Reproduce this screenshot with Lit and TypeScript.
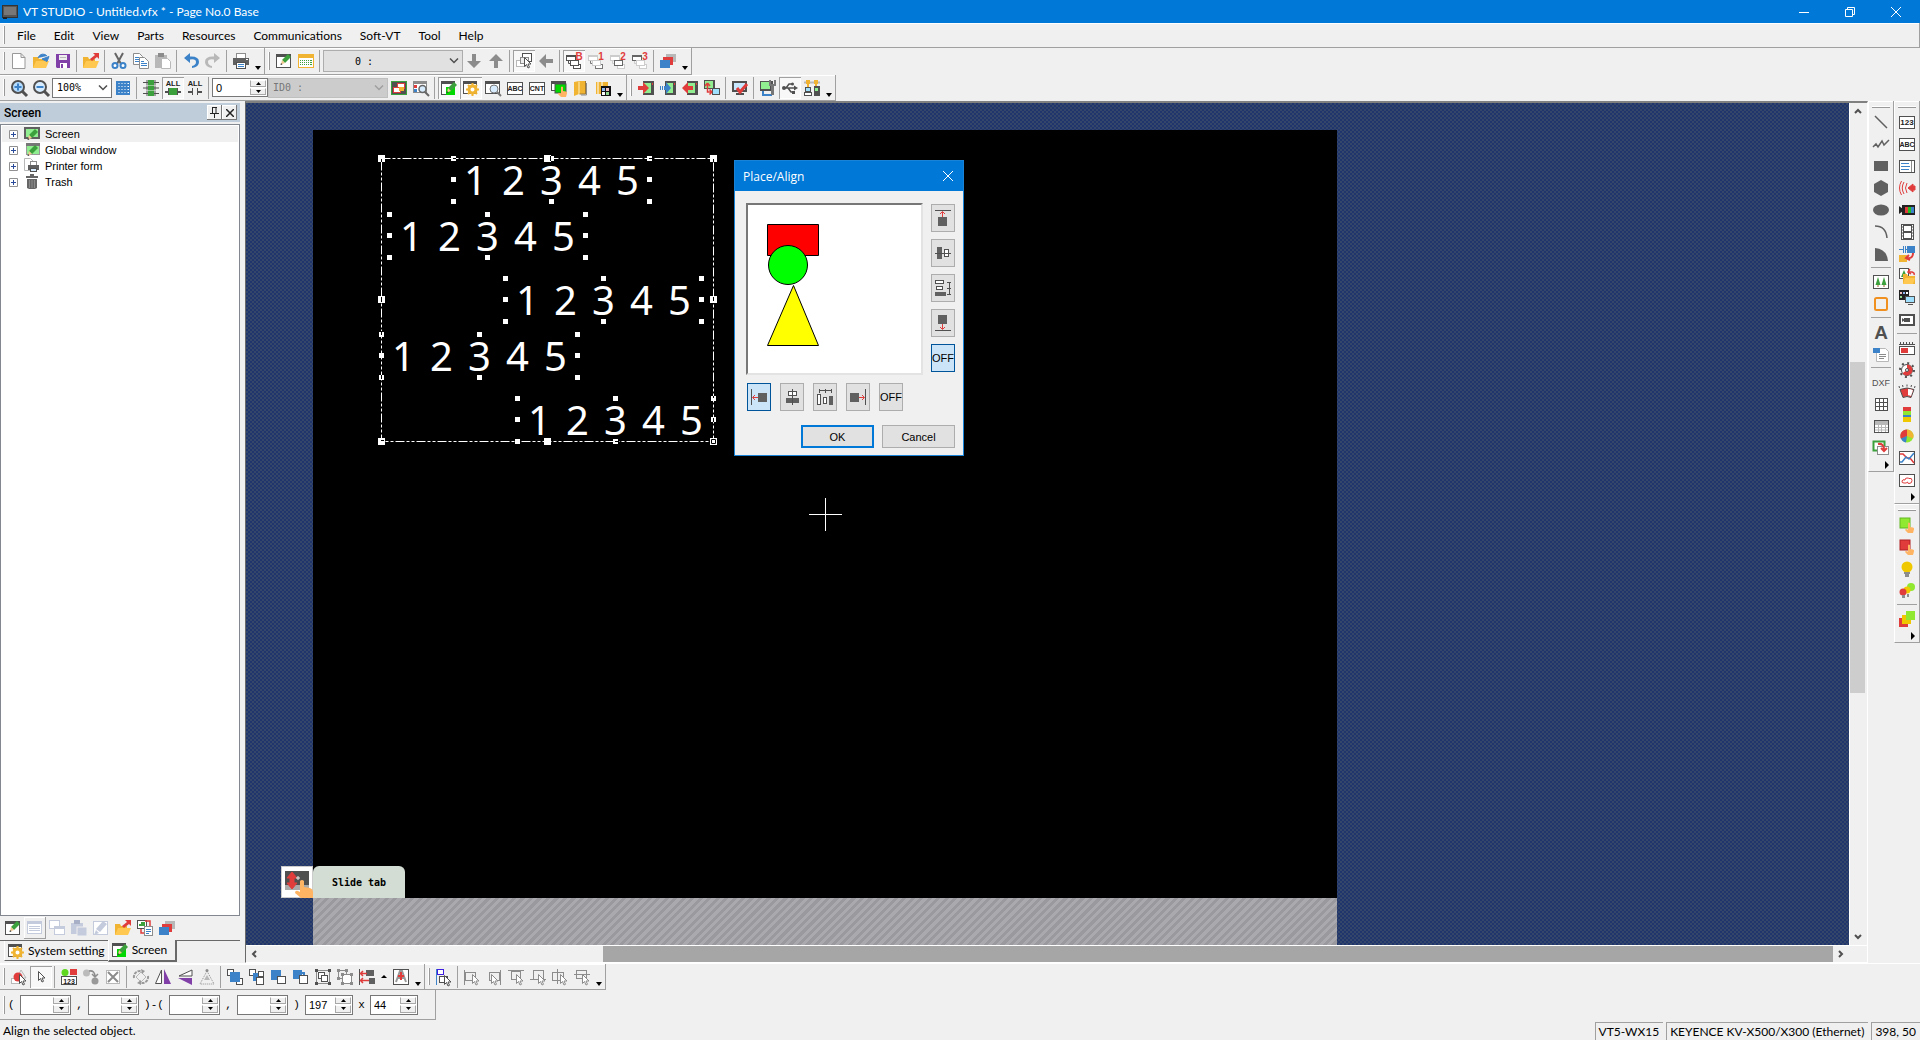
import { LitElement, html, svg, css, TemplateResult, SVGTemplateResult } from "lit";
import { customElement, property } from "lit/decorators.js";
import { classMap } from "lit/directives/class-map.js";
import { styleMap } from "lit/directives/style-map.js";

type Shape = SVGTemplateResult | SVGTemplateResult[];

const D = "#505050";
const M = "#8c8c8c";
const L = "#b8b8b8";
const RD = "#e03c3c";
const GR = "#3ca03c";
const LG = "#90ee90";
const BL = "#3c82c8";
const YE = "#f0b432";
const PU = "#8040a8";
const SK = "#ffb464";
const PALE = "#c4cbdc";

const R = (x: number, y: number, w: number, h: number, f = "none", s = "none", sw = 1) =>
  svg`<rect x=${x} y=${y} width=${w} height=${h} fill=${f} stroke=${s} stroke-width=${sw} />`;
const P = (d: string, f = "none", s = "none", sw = 1) =>
  svg`<path d=${d} fill=${f} stroke=${s} stroke-width=${sw} />`;
const C = (x: number, y: number, r: number, f = "none", s = "none", sw = 1) =>
  svg`<circle cx=${x} cy=${y} r=${r} fill=${f} stroke=${s} stroke-width=${sw} />`;
const T = (x: number, y: number, t: string, size = 7, f = "#222") =>
  svg`<text x=${x} y=${y} font-size=${size} fill=${f} text-anchor="middle" font-weight="bold" font-family="Liberation Sans, sans-serif">${t}</text>`;

const windowBox = (x: number, y: number, w: number, h: number, c = D, f = "#fff") => [
  R(x + 0.5, y + 0.5, w - 1, h - 1, f, c),
  R(x, y, w, 3, c),
];
const pencil = (x: number, y: number) =>
  svg`<g transform="translate(${x} ${y})">${P("M2 6L8 0l3 3-6 6z", GR)}${P("M2 6l3 3-4 1.5z", "#f0c890")}${P("M.5 11l.5-2 1.500 1.500z", "#333")}</g>`;
const arrowCursor = (x: number, y: number, c = D) =>
  svg`<g transform="translate(${x} ${y})">${P("M.5.5v9l2-2 1.500 3.500 1.500-.700-1.500-3.300h3z", "#fff", c)}</g>`;
const hand = (x: number, y: number) =>
  svg`<g transform="translate(${x} ${y})">${P("M3 0q1-.8 2 0v4l3 .6q1.500.400 1 2l-1 3.400h-5L0 7q.500-1.500 2-.7l1 .4z", SK)}</g>`;
const folder = (x: number, y: number) =>
  svg`<g transform="translate(${x} ${y})">${P("M0 0h5l1 2h6v9H0z", YE)}${P("M3 4h13l-3 7H0z", "#ffc850")}</g>`;
const layers = [R(6, 1, 10, 8, L), R(3, 4, 10, 8, RD), R(0, 7, 10, 8, BL)];
const stack = (n: string, a: string, b: string, c: string): Shape => [
  R(0.5, 2.5, 9, 5, "#fff", a),
  R(0, 2, 10, 2, a),
  P("M2.500 8v2.500h3M8.500 12v2.500h1", "none", c),
  R(7.5, 11.5, 7, 4, "#fff", c),
  R(4.5, 7.5, 8, 5, "#fff", b),
  T(13, 7, n, 10, RD),
];
const plcArrow = (c: string, d: string) => [
  R(5, 1, 11, 14, D), R(6, 3, 7, 10, LG), R(14, 3, 1, 2, RD), P(d, c),
];
const boxedText = (t: string) => [R(0.5, 2.5, 15, 12, "#fff", D), T(8, 11, t, 7)];

const ICONS: Record<string, Shape> = {
  "new": P("M1.500.5h8.500l4 4v11H1.500zM10 .5v4h4", "#fff", "#999"),
  "open": [folder(0, 4), P("M5 5q2-5 7-3.500l2 1.500M16 3.500l-2 5-5-2.500z", BL, BL)],
  "save": [P("M1 1h14v14H2l-1-1z", PU), R(4, 2, 8, 5, "#eee"), R(5, 10, 7, 5, "#fff"), R(6, 11, 2, 4, PU), R(5, 4, 6, 1, L)],
  "export": [folder(0, 4), P("M16 0v6l-2-2-5 4-2-2 5-4-2-2z", RD)],
  "cut": [P("M4 0l6 11M12 0L6 11", "none", "#666", 2), C(4, 12.5, 2.5, "#fff", BL, 2), C(12, 12.5, 2.5, "#fff", BL, 2)],
  "copy": [P("M.5.5h6l3 3v8h-9z", "#fff", M), P("M2 4.500h4M2 6.500h5M2 8.500h5", "none", BL), P("M6.500 4.500h5l4 4v7h-9z", "#fff", M), P("M8 8.500h3M8 10.500h6M8 12.500h6", "none", BL)],
  "paste": [R(0, 2, 12, 13, L), R(3, 0, 6, 4, M), P("M6.500 5.500h6l3 3v7h-9z", "#fff", L)],
  "undo": P("M7 0L1 5l6 5V6.500q6-1 6 2.500 0 3-4 4v2q7-1 7-6 0-6-9-5.500z", BL),
  "redo": P("M9 0l6 5-6 5V6.500q-6-1-6 2.500 0 3 4 4v2q-7-1-7-6 0-6 9-5.500z", L),
  "print": [R(3.5, 0.5, 9, 6, "#fff", M), R(0, 5, 16, 7, "#606060"), R(3.5, 9.5, 9, 6, "#fff", D), P("M5 11.500h6M5 13.500h6", "none", BL), R(13, 6, 2, 1, "#fff")],
  "edit": [...windowBox(0, 1, 15, 14), pencil(4, 1)],
  "schedule": [R(0.5, 1.5, 15, 13, "#fff", YE), R(0, 1, 16, 4, YE), P("M2 7.500h12M2 9.500h12M2 11.500h12", "none", GR), P("M3.500 6v8M5.500 6v8M7.500 6v8M9.500 6v8M11.500 6v8", "none", "#fff")],
  "down": P("M6 1h4v7h5l-7 7-7-7h5z", M),
  "up": P("M6 15h4V8h5L8 1 1 8h5z", M),
  "left": P("M15 6v4H8v5L1 8l7-7v5z", M),
  "pick": [R(6.5, 0.5, 9, 8, "#fff", D), R(0.5, 7.5, 9, 6, "#fff", L), R(4.5, 4.5, 8, 6, "#eee", M), arrowCursor(8, 4)],
  "base": stack("B", D, D, D),
  "win 1": stack("1", "#ccc", "#ccc", "#777"),
  "win 2": stack("2", "#ccc", "#666", "#ccc"),
  "win 3": stack("3", "#666", "#ccc", "#ccc"),
  "layers": layers,
  "zoom in": [C(7, 7, 6, "#b4dcff", D, 2), P("M11 11l5 5", "none", D, 3), P("M7 3.500v7M3.500 7h7", "none", BL, 2)],
  "zoom out": [C(7, 7, 6, "#d8ecff", D, 2), P("M11 11l5 5", "none", D, 3), P("M3.500 7h7", "none", BL, 2)],
  "grid": [R(1, 1, 14, 14, BL), P("M2 3.500h12M2 6.500h12M2 9.500h12M2 12.500h12", "none", "#fff"), P("M2.500 2v12M5.500 2v12M8.500 2v12M11.500 2v12", "none", BL, 2)],
  "rows": [P("M0 2.500h16M0 8h16M0 13.500h16", "none", D, 1), R(5, 0, 6, 5, GR), R(5, 5.5, 6, 5, GR), R(5, 11, 6, 5, GR), P("M4 0v5M12 0v5M4 5.500v5M12 5.500v5M4 11v5M12 11v5", "none", D)],
  "all on": [T(8, 6, "ALL", 7.5), P("M0 12h16", "none", D, 2), R(4, 8, 8, 7, GR), P("M3.500 8v7M12.500 8v7", "none", D)],
  "all off": [T(8, 6, "ALL", 7.5), P("M1 12h4M11 12h4", "none", D, 2), P("M5.500 8v7M10.500 8v7", "none", D)],
  "frames": [R(0, 1, 16, 14, D), R(0.5, 1.500, 15, 13, D, GR), R(6.5, 3.5, 7, 5, "#fff", RD), R(2.5, 7.500, 7, 5, "#fff", RD), R(8, 7, 5, 4, YE)],
  "find": [...windowBox(0, 1, 14, 12, M), R(1, 5, 3, 3, RD), R(1, 9, 3, 3, BL), C(9.500, 9, 3.500, "#d8ecff", "#666", 1.500), P("M12 12l4 4", "none", "#666", 2)],
  "screen edit": [...windowBox(0, 1, 14, 14), R(5, 7, 9, 8, "#00d800"), pencil(5, 2)],
  "settings": [...windowBox(0, 1, 14, 13), C(9.5, 9.5, 3.500, "#fff", YE, 3), P("M9.500 3v3M9.500 13v3M3 9.500h3M13 9.500h3M5 5l2 2M12 12l2 2M5 14l2-2M12 7l2-2", "none", YE, 2)],
  "preview": [...windowBox(0, 1, 15, 13), C(9, 9, 4, "#d8ecff", "#777"), P("M12 12l4 4", "none", "#777", 2)],
  "abc": boxedText("ABC"),
  "cnt": boxedText("CNT"),
  "touch": [...windowBox(0, 1, 15, 10), R(4, 4, 11, 9, "#00d800", D), hand(7, 7)],
  "book": [P("M1 2l5-1h6v13H6l-5 2z", YE), P("M6 1.500v13", "none", "#fff0c0"), P("M12.500 1v13h-6", "none", "#a07830"), P("M13.500 3v12H8", "none", M)],
  "catalog": [P("M1 2h12v12H1z", YE), P("M3 2v12M7 1v5", "none", "#fff"), R(6, 6, 10, 10, "#111"), R(7, 8, 3, 3, "#90b8f0"), R(11, 8, 3, 3, "#f0c0c0"), R(7, 12, 3, 3, "#fff"), R(11, 12, 3, 3, "#90d890")],
  "send": plcArrow(RD, "M0 6h5V2l6 6-6 6v-4H0z"),
  "send part": plcArrow(BL, "M0 6h1v4H0zM2 6h1v4H2zM4 6h2V2l5 6-5 6v-4H4z"),
  "receive": plcArrow(RD, "M11 6H6V2L0 8l6 6v-4h5z"),
  "sync": [R(0, 0, 11, 9, D), R(1, 1, 8, 7, LG), R(8.5, 8.5, 7, 6, "#a0e0ff", D), P("M3.500 5v7H8M3.500 3L1 6M3.500 3L6 6M8 12l-2.500-2.500M8 12l-2.500 2.500", "none", RD, 1.5)],
  "verify": [R(0, 1, 15, 11, D), R(2, 3, 11, 7, "#c8e8ff"), R(4, 13, 8, 2, D), P("M5 8l3 4 7-8", "none", RD, 3)],
  "comm setup": [R(0, 1, 13, 10, D), R(1, 2, 9, 7, LG), P("M3 11v4h9", "none", BL, 2), P("M12.500 4v11", "none", "#777", 3), P("M10 0v5h5V0", "none", "#777", 2)],
  "usb": [P("M1 8h12M4 8l3-4h3M6 8l3 4h3", "none", D, 1.5), C(2, 8, 2, D), C(10.5, 4, 1.5, D), R(10, 11, 3, 3, D), P("M12 5.500v5l4-2.500z", D)],
  "network": [P("M0 2.500h16", "none", L, 2), P("M4 2v6M12 2v5", "none", YE, 2), R(2, 0, 4, 4, YE), R(10, 0, 4, 4, YE), R(1.5, 7.5, 5, 4, "#a0e0ff", D), R(0.5, 12.5, 7, 3, "#fff", D), R(10, 6, 6, 10, D), R(11, 8, 3, 3, LG)],
  "list": [...windowBox(0, 1, 15, 13, PALE), P("M2 6.500h11M2 8.500h11M2 10.500h11", "none", PALE)],
  "copy off": [R(0.5, 0.5, 10, 8, "#fff", PALE), ...windowBox(5, 6, 11, 9, PALE)],
  "paste off": [R(0, 3, 12, 11, PALE), R(3, 0, 6, 4, "#a8b0c8"), R(6, 7, 10, 9, PALE, "#f0f0f0")],
  "rename off": [R(0.5, 1.5, 14, 13, "#fff", PALE), P("M3 9l7-8 4 3-7 8zM3 10l3 3-5 2z", PALE)],
  "convert": [R(0.5, 0.5, 9, 8, "#fff", D), P("M2 5h6M4 3h4", "none", GR, 2), P("M8 1h5v7M4 9v4h4", "none", RD, 1.5), R(7.5, 6.5, 8, 9, "#fff", M), P("M9 9.500h5M9 11.500h5M9 13.500h3", "none", BL)],
  "select shape": [P("M10 1l5 8H6z", "#eee", L), R(0.5, 9.500, 8, 5, "#fff", L), C(7, 8, 4.500, RD), arrowCursor(8, 5)],
  "select": arrowCursor(5, 2),
  "parts": [C(4, 3.5, 3.5, "#60d820"), R(9, 0, 7, 6, RD), R(0.5, 7.500, 15, 8, "#fff", D), T(8, 14.5, "123", 7)],
  "swap": [C(3.5, 4, 3.5, "#bbb"), C(12, 12, 3.5, "#999"), P("M6 2q6-1 6 6M9 5l3 3 3-3", "none", M, 1.5)],
  "delete": [R(1.5, 1.5, 13, 13, "#fff", L), P("M3 3l10 10M13 3L3 13", "none", M, 2)],
  "rotate": [P("M8 3l5 5-5 5-5-5z", "none", L), svg`<path d="M1 9a6 6 0 0 1 7-7M15 7a6 6 0 0 1-7 7" fill="none" stroke="#999" stroke-width="2" stroke-dasharray="3 1" />`, P("M8 0l4 2-3 3zM8 11l-4 3 4 2z", "#999")],
  "flip h": [P("M6.500 1v13.500H.5z", "#fff", D), P("M9 0v15h7z", PU)],
  "flip v": [P("M15 1v6H2z", "#fff", D), P("M15 9v7L1 9z", PU)],
  "slant": [svg`<path d="M8 2L1 15h14z" fill="none" stroke="#8c8c8c" stroke-dasharray="1 1" />`, P("M8 6l-3 5h6z", L), C(8, 1.5, 1.5, M)],
  "front": [R(0.5, 0.5, 6, 6, "#fff", D), R(9.5, 9.5, 6, 6, "#fff", D), R(3, 3, 10, 10, BL)],
  "forward": [R(0.5, 0.5, 6, 6, "#fff", D), R(4, 4, 8, 8, BL), R(9.5, 2.5, 5, 5, "#fff", D), R(7.5, 8.500, 7, 7, "#fff", D)],
  "backward": [R(0, 1, 10, 10, BL), R(6.5, 7.500, 8, 7, "#fff", D)],
  "back": [R(0, 1, 9, 9, BL), P("M9 4h2v3", "none", BL, 2), R(6.5, 6.500, 8, 8, "#fff", D)],
  "group": [R(1.5, 1.5, 13, 13, "none", M), R(3.5, 3.500, 6, 6, "#fff", D), R(6.5, 6.500, 6, 6, "#fff", D), R(0, 0, 3, 3, D), R(13, 0, 3, 3, D), R(0, 13, 3, 3, D), R(13, 13, 3, 3, D)],
  "ungroup": [R(1.5, 1.5, 8, 8, "none", M), R(5.5, 5.500, 9, 9, "#fff", M), R(0, 0, 3, 3, M), R(8, 0, 3, 3, M), R(0, 8, 3, 3, M), R(4, 4, 3, 3, M), R(13, 4, 3, 3, M), R(4, 13, 3, 3, M), R(13, 13, 3, 3, M)],
  "align": [P("M.5 0v16", "none", D), R(7, 1, 8, 6, "#606060"), R(10, 9, 6, 6, "#606060"), P("M2 4.500h6M4 2L1.500 4.500 4 7M2 11.500h8M4 9l-2.500 2.500L4 14", "none", RD, 1.5)],
  "anchor": [R(0.5, 0.5, 15, 15, "#fff", D), P("M3 13L7 2h2l4 11M5 9h6", "none", "#999", 2), P("M8 3v8M5 7h6", "none", RD, 2)],
  "snap": [P("M.5 0v16", "none", BL), R(1.5, 0.5, 6, 5, "#fff", "#4020e0"), R(3.5, 7.500, 8, 6, "#fff", D), arrowCursor(8, 6)],
  "snap left": [P("M.5 1v15", "none", M), R(1.5, 3.500, 10, 8, "none", M), arrowCursor(8, 5, M)],
  "snap right": [P("M14.500 1v15", "none", M), R(3.5, 3.500, 10, 8, "none", M), arrowCursor(5, 5, M)],
  "snap top": [P("M0 1.500h16", "none", M), R(3.5, 2.5, 9, 8, "none", M), arrowCursor(8, 5, M)],
  "snap bottom": [P("M0 10.500h16", "none", M), R(3.5, 1.500, 10, 9, "none", M), arrowCursor(8, 5, M)],
  "snap mid": [P("M5.500 0v15", "none", M), R(0.5, 3.500, 11, 8, "none", M), arrowCursor(8, 5, M)],
  "snap center": [P("M0 5.500h16", "none", M), R(2.5, 1.500, 10, 8, "none", M), arrowCursor(8, 5, M)],
  "line": P("M2 2l12 12", "none", "#606060", 1.5),
  "polyline": P("M0 11l3-3 2 3 4-6 2 4 5-5", "none", "#606060", 1.5),
  "rect": R(1, 3, 14, 10, "#606060"),
  "polygon": P("M8 0l7 4v8l-7 4-7-4V4z", "#606060"),
  "ellipse": svg`<ellipse cx="8" cy="8" rx="8" ry="5.5" fill="#606060" />`,
  "arc": P("M2 2q11 0 12 12", "none", "#606060", 1.5),
  "sector": P("M2 2q12 1 13 13H2z", "#606060"),
  "image": [R(0.5, 1.5, 15, 13, "#fff", D), P("M5 3L2.500 11h5zM11 3L8.500 11h5z", GR), R(4.500, 11, 1, 2, "#a06030"), R(10.500, 11, 1, 2, "#a06030")],
  "frame": svg`<rect x="2" y="2" width="12" height="12" rx="1.500" fill="none" stroke="#f09020" stroke-width="2" />`,
  "text": T(8, 15, "A", 19, D),
  "note": [P("M3.500 2.500h9l3 3v10h-12z", "#fff", L), P("M6 8.500h7M6 10.500h7M6 12.500h5", "none", M), P("M0 2h7v5H0z", BL)],
  "dxf": svg`<text x="8" y="12" font-size="9" fill="#505050" text-anchor="middle" font-family="Liberation Sans, sans-serif">DXF</text>`,
  "table": [R(2.5, 2.5, 12, 12, "#fff", D), P("M6.500 2v13M10.500 2v13M2 6.500h13M2 10.500h13", "none", D)],
  "sheet": [R(1.5, 2.5, 14, 12, "#fff", D), R(2, 3, 13, 3, L), P("M5.500 3v11M8.500 3v11M12.500 3v11M2 6.500h13M2 9.500h13M2 12h13", "none", L)],
  "link": [R(0.5, 1.5, 11, 9, "#fff", GR, 2), R(4.5, 6.500, 11, 8, "#fff", M), P("M5 4q6-1 6 6M8 8l3 3 3-3", "none", RD, 2)],
  "numeric": [R(0.5, 2.5, 15, 12, "#fff", D), T(8, 11, "123", 8)],
  "string": boxedText("ABC"),
  "message": [R(0.5, 2.5, 15, 12, "#fff", D), P("M2 5.500h8M2 8.500h9M2 11.500h8", "none", BL), P("M12.500 3v11", "none", M)],
  "sound": [P("M9 8l5-4v2h2v4h-2v2z", RD, RD), P("M8 3q-3 5 0 10M5 2q-3.500 6 0 12M2.500 1q-4 7 0 14", "none", RD)],
  "video": [R(3, 3, 13, 10, "#222"), P("M0 4l4 3v2l-4 3z", "#222"), R(6, 5, 3, 6, RD), R(9, 5, 3, 6, "#20c020"), R(12, 5, 3, 6, BL)],
  "film": [R(2, 0, 13, 16, D), R(5, 2, 7, 5, "#fff"), R(5, 9, 7, 5, "#fff"), P("M3.500 1v14M13.500 1v14", "none", "#fff"), P("M3 3h1M3 6h1M3 9h1M3 12h1M13 3h1M13 6h1M13 9h1M13 12h1", "none", D)],
  "recipe": [R(8, 0, 8, 7, BL), P("M0 3.500h4M4.500 0v7M6.500 0v7M7 3.500h2", "none", BL), R(0, 9, 8, 7, YE), P("M14 7q0 6-6 5M10 9l-3 3 4 2", "none", RD, 2)],
  "file view": [R(0.5, 0.5, 9, 10, "#fff", D), P("M5 2L2 9h6z", GR), P("M4 6h4l1 2h7v8H4z", YE), P("M6 10h10l-2 6H4z", "#ffc850"), P("M9 4h4q3 1 2 3M11 1L9 4l3 2", "none", RD, 1.5)],
  "remote": [R(0, 0, 10, 10, "#222"), R(1, 2, 2, 2, "#f0c0c0"), R(4, 2, 2, 2, "#90b8f0"), R(1, 6, 2, 2, "#90d890"), R(7, 2, 2, 2, "#fff"), R(6.5, 6.500, 9, 6, "#a0e0ff", D), R(9, 14, 5, 1, D)],
  "camera": [R(0, 2, 16, 12, D), R(2, 4, 12, 8, "#fff"), R(5, 6, 6, 4, D), P("M3 6v4l3-2z", D)],
  "bar": [R(0.5, 6.500, 15, 8, "#fff", D), R(2, 8, 7, 5, RD), P("M0 4.500h16M1.500 2v3M4.500 2v3M7.500 2v3M10.500 2v3M13.500 2v3", "none", D)],
  "gauge": [svg`<circle cx="8" cy="8" r="7" fill="none" stroke="#505050" stroke-width="2" stroke-dasharray="2 3.500" />`, C(8, 8, 5.500, "#fff", D), P("M8 2.500a5.500 5.500 0 1 1-4.500 8.700L8 8z", RD), C(8, 8, 1.500, "#fff", D)],
  "tank": [P("M1 5.500q7-3 14 0l-3 8q-4-2-8 0z", RD, D), P("M9 5q3 0 5 1.200L12 12q-1-.6-3-.8z", "#fff"), P("M.5 4L0 2M4 3l-.5-2M8 2.500V.5M12 3l.5-2M15.500 4l.5-2", "none", D)],
  "level": [R(4, 1, 8, 5, RD), R(4, 5, 8, 4, "#90e830"), R(4, 9, 8, 2, BL), R(4, 11, 8, 5, "#f0c800")],
  "pie": [C(8, 8, 6.5, "#90e830"), P("M8 8V1.500a6.500 6.500 0 0 1 6 9z", YE), P("M8 8V1.500A6.500 6.500 0 0 0 2 11z", RD), P("M8 8l-6 2.500a6.500 6.500 0 0 0 5 4z", BL)],
  "trend": [R(0.5, 1.500, 15, 13, "#fff", D), P("M1 4h3l4 4h3l4 5", "none", RD, 1.5), P("M1 12h2l4-5 3 2 5-6", "none", BL, 1.5)],
  "cloud": [R(0.5, 2.500, 15, 12, "#fff", D), P("M5 11q-2.500 0-2-2t3-1q0-2 2-2 1.500 0 2 .5 3-1 3 2t-3 3q-1.500 0-1.500-1.500-1 1.500-3.500 1", "none", RD, 1)],
  "switch green": [R(1, 1, 10, 10, "#90e830", "#60b820"), hand(6, 6)],
  "switch red": [R(1, 1, 10, 10, RD, "#b02020"), hand(6, 6)],
  "lamp": [C(8, 6, 5.5, "#f0c800"), R(5, 11, 6, 2, M), R(6, 13, 4, 3, M)],
  "lamps": [C(12, 4, 4, "#90e830"), C(8, 7, 3.5, "#f0c800"), C(4, 9, 3.500, RD), R(3, 12, 3, 3, M), R(8, 11, 2, 3, M)],
  "objects": [R(0, 7, 9, 9, RD), R(3, 4, 9, 9, "#f0c800"), R(7, 0, 9, 9, "#90e830")],
  "tree screen": [R(0, 1, 16, 12, "#606060"), R(2, 3, 12, 8, LG), pencil(3, 3)],
  "tree window": [R(2.5, 1.5, 13, 11, LG, "#999"), R(2, 1, 14, 3, "#777"), pencil(3, 3)],
  "tree printer": [P("M.5.500h6l3 3v9h-9z", "#fff", L), R(6.5, 3.500, 6, 5, "#fff", M), R(4, 7, 11, 5, "#606060"), R(6.5, 10.500, 6, 3, "#d8ecff", D)],
  "tree trash": [R(2, 2, 12, 2, "#666"), R(6, 0, 4, 2, "#666"), P("M3 5h10v9l-2 1H5l-2-1z", "#666"), P("M5.500 6v8M8 6v8M10.500 6v8", "none", M)],
  "app": [R(0.5, 1.500, 15, 12, "#555", "#333"), R(2, 3, 12, 8, "#777"), R(1, 13, 4, 2, "#222")],
  "align top": [P("M0 .5h16", "none", D), R(3, 7, 9, 9, "#606060"), P("M7.500 7V2M5 4l2.500-2.500L10 4", "none", RD)],
  "align middle": [R(2, 2, 5, 12, "#606060"), R(9.500, 4.500, 4, 7, "#fff", D), P("M0 8.500h16", "none", D)],
  "spread v": [R(0.5, 0.500, 8, 3, "#fff", D), R(1.5, 6.500, 6, 3, "#fff", D), R(0, 12, 11, 4, "#606060"), P("M14.500 2v13M12 2.500h4M12 8.500h4M12 14.500h4", "none", D)],
  "align bottom": [P("M0 15.500h16", "none", D), R(3, 0, 9, 9, "#606060"), P("M7.500 9v5M5 12l2.500 2.500L10 12", "none", RD)],
  "align left": [P("M.5 0v16", "none", D), R(7, 4, 9, 9, "#606060"), P("M7 8.500H2M4 6L1.500 8.500 4 11", "none", RD)],
  "align center": [R(4.500, 2.500, 8, 4, "#fff", D), R(2, 9, 13, 5, "#606060"), P("M8.500 0v16", "none", D)],
  "spread h": [R(0.5, 5.500, 3, 10, "#fff", D), R(6.500, 8.500, 3, 6, "#fff", D), R(12, 7, 4, 9, "#606060"), P("M2 1.500h13M2.500 0v4M8.500 0v4M14.500 0v4", "none", D)],
  "align right": [P("M15.500 0v16", "none", D), R(0, 4, 9, 9, "#606060"), P("M9 8.500h5M12 6l2.500 2.500L12 11", "none", RD)],
  "slide": [R(0, 0, 32, 32, "#fff"), R(0.5, 0.5, 31, 31, "none", "#ccc"), R(4, 5, 24, 14, D), R(4, 19, 24, 5, "#aaa"), P("M11 6l5 6h-3v5h3l-5 6-5-6h3v-5H6z", RD, RD), P("M15 12h4M17 10v4", "none", "#eee"), P("M19 15q2-2 4 0v6l6 1q3 1 3 4v6H20l-6-5q0-3 3-2l2 1z", SK)],
};

@customElement("ui-icon")
class UiIcon extends LitElement {
  @property() name = "";
  @property({ type: Number }) size = 16;
  static styles = css`
    :host { display: block; line-height: 0; }
    svg { display: block; overflow: visible; }
  `;
  render() {
    return html`<svg width=${this.size} height=${this.size} viewBox="0 0 ${this.size} ${this.size}" aria-hidden="true">${ICONS[this.name]}</svg>`;
  }
}

/** Strip of tool buttons. Tokens: "|" divider, "v" / "^" / ">" overflow arrows, "!name" pressed, "+name" raised, "@name" slot. */
@customElement("tool-strip")
class ToolStrip extends LitElement {
  @property({ attribute: false }) items: string[] = [];
  @property({ type: Boolean, reflect: true }) vertical = false;
  @property({ type: Boolean, reflect: true }) plain = false;
  static styles = css`
    :host { display: flex; align-items: center; box-sizing: border-box; border-right: 1px solid #a0a0a0; border-bottom: 1px solid #a0a0a0; box-shadow: inset 0 1px #fff; }
    :host([plain]) { border: 0; box-shadow: none; }
    :host([vertical]) { flex-direction: column; padding-top: 2px; border-left: 1px solid #fff; }
    .grip { flex: none; box-sizing: border-box; width: 2px; align-self: stretch; margin: 4px 3px; border-left: 1px solid #fff; border-right: 1px solid #999; }
    :host([vertical]) .grip { width: auto; height: 2px; margin: 3px; border: 0; border-top: 1px solid #fff; border-bottom: 1px solid #999; }
    .tool { flex: none; display: grid; place-items: center; width: 22px; height: 22px; margin: 0; padding: 0; border: 0; background: none; }
    .pressed { background: #f8f8f8; box-shadow: inset 1px 1px #a0a0a0, inset -1px -1px #fff; }
    .raised { box-shadow: inset -1px -1px #a0a0a0, inset 1px 1px #fff; }
    .bar { flex: none; width: 1px; height: 22px; margin: 0 3px 0 2px; background: #a0a0a0; }
    :host([vertical]) .bar { width: 20px; height: 1px; margin: 2px 0 3px; }
    .more { flex: none; display: grid; place-items: end center; width: 12px; height: 20px; margin: 0; padding: 0; border: 0; background: none; }
    .up { place-items: center; }
    :host([vertical]) .more { width: 22px; height: 12px; place-items: center end; }
  `;
  private item(t: string): TemplateResult {
    if (t === "|") return html`<span class="bar"></span>`;
    if (t === "v") return html`<button class="more" aria-label="More tools"><svg width="8" height="6"><path d="M1 1h6L4 5z" /></svg></button>`;
    if (t === "^") return html`<button class="more up" aria-label="More alignments"><svg width="8" height="6"><path d="M1 4h6L4 1z" /></svg></button>`;
    if (t === ">") return html`<button class="more" aria-label="More tools"><svg width="8" height="8"><path d="M1 0v8l4-4z" /></svg></button>`;
    if (t[0] === "@") return html`<slot name=${t.slice(1)}></slot>`;
    const pressed = t[0] === "!";
    const raised = t[0] === "+";
    const name = pressed || raised ? t.slice(1) : t;
    return html`<button class=${classMap({ tool: true, pressed, raised })} aria-label=${name}><ui-icon name=${name}></ui-icon></button>`;
  }
  render() {
    return html`${this.plain ? "" : html`<span class="grip"></span>`}${this.items.map((t) => this.item(t))}`;
  }
}

@customElement("spin-box")
class SpinBox extends LitElement {
  @property() value = "";
  @property() label = "";
  static styles = css`
    :host { display: flex; box-sizing: border-box; height: 20px; border: 1px solid #777; background: #fff; padding: 1px; outline: 0; }
    .field { flex: 1; min-width: 0; border: 0; padding: 0 2px; margin: 0; background: none; font: 11px "Liberation Sans", sans-serif; color: #000; outline: 0; }
    .steps { display: flex; flex-direction: column; gap: 1px; width: 16px; }
    .step { flex: 1; min-height: 0; display: grid; place-items: center; margin: 0; padding: 0; border: 1px solid #a8a8a8; border-top-color: #fff; background: #f0f0f0; }
    svg { display: block; }
  `;
  render() {
    return html`<input class="field" type="text" aria-label=${this.label} .value=${this.value} />
      <span class="steps">
        <button class="step" aria-label="Increase"><svg width="5" height="3"><path d="M0 3h5L2.500 0z" /></svg></button>
        <button class="step" aria-label="Decrease"><svg width="5" height="3"><path d="M0 0h5L2.500 3z" /></svg></button>
      </span>`;
  }
}

/** Placed numeric displays, in artboard coordinates. */
const PLACED = [
  { x: 140, y: 28 }, { x: 76, y: 84 }, { x: 192, y: 148 }, { x: 68, y: 204 }, { x: 204, y: 268 },
];
const DIGITS = ["1", "2", "3", "4", "5"];

@customElement("art-board")
class ArtBoard extends LitElement {
  static styles = css`
    :host { display: block; position: relative; width: 1024px; height: 768px; background: #000; }
    .numeric { position: absolute; display: grid; grid-template-columns: repeat(5, 38px); justify-content: center; align-items: center; width: 197px; height: 44px; font: 40px/44px "Noto Sans", sans-serif; color: #fff; text-align: center; }
    .marks { position: absolute; left: 68px; top: 28px; overflow: visible; }
    .cross { position: absolute; left: 495px; top: 367px; }
    .tab { position: absolute; left: 0; bottom: 0; width: 92px; height: 32px; border: 0; padding: 0; border-radius: 6px 6px 0 0; background: #d3ddd3; color: #000; font: bold 10px "DejaVu Sans Mono", monospace; }
    .slide { position: absolute; left: -32px; bottom: 0; padding: 0; border: 0; background: none; }
  `;
  render() {
    const handle = (x: number, y: number) => svg`<rect x=${x - 2} y=${y - 2} width="5" height="5" fill="#fff" />`;
    const big = (x: number, y: number) => svg`<rect x=${x - 3} y=${y - 3} width="7" height="7" fill="#fff" />`;
    return html`
      ${PLACED.map((p) => html`<div class="numeric" style=${styleMap({ left: `${p.x}px`, top: `${p.y}px` })}>${DIGITS.map((d) => html`<span>${d}</span>`)}</div>`)}
      <svg class="marks" width="333" height="284" aria-hidden="true">
        <path d="M.5.5h332v283H.5z" fill="none" stroke="#fff" stroke-dasharray="9 2 3 2 3 2" />
        ${PLACED.map((p) => [0, 98, 196].map((dx) => [0, 21, 43].map((dy) => (dx === 98 && dy === 21 ? "" : handle(p.x - 68 + dx, p.y - 28 + dy)))))}
        ${[0, 166, 332].map((x) => [0, 141, 283].map((y) => (x === 166 && y === 141 ? "" : big(x, y))))}
        <path d="M0 139h1v5h-1zM332 139h1v4h-1zM0 173h1v4h-1zM0 217h1v4h-1zM332 260h1v4h-1zM332 238h1v2h-1zM169 -2h1v5h-1zM72 0h3v1h-3zM268 0h4v1h-4zM234 283h4v1h-4zM0 1h1v3h-1zM332 1h1v3h-1zM0 282h3v1h-3z" fill="#000" />
        <path d="M330.500 281.500h4v4h-4z" stroke="#000" fill="none" />
      </svg>
      <svg class="cross" width="35" height="35" aria-hidden="true"><path d="M17.500 1v33M1 17.500h33" stroke="#fff" /></svg>
      <button class="slide" aria-label="Slide screen"><ui-icon name="slide" size="32"></ui-icon></button>
      <button class="tab">Slide tab</button>
    `;
  }
}

@customElement("align-dialog")
class AlignDialog extends LitElement {
  static styles = css`
    :host { display: block; box-sizing: border-box; width: 230px; border: 1px solid #1883d7; background: #f0f0f0; font: 11px "Liberation Sans", sans-serif; color: #000; }
    .title { display: flex; align-items: center; justify-content: space-between; height: 30px; padding: 0 8px; background: #0078d7; color: #fff; font: 12px "Open Sans", sans-serif; }
    .close { display: grid; place-items: center; width: 14px; height: 14px; padding: 0; border: 0; background: none; }
    .body { display: grid; grid-template-columns: 1fr 24px; gap: 8px; padding: 12px 8px 7px 11px; }
    .preview { box-sizing: border-box; height: 172px; background: #fff; border: 2px solid; border-color: #777 #e3e3e3 #e3e3e3 #777; }
    .preview svg { display: block; }
    .side { display: flex; flex-direction: column; gap: 7px; padding-top: 1px; height: 170px; }
    .under { grid-column: 1 / -1; display: flex; gap: 9px; padding-left: 1px; }
    .opt { display: grid; place-items: center; flex: none; box-sizing: border-box; width: 24px; height: 28px; padding: 0; border: 1px solid #adadad; background: #e1e1e1; font: inherit; color: #000; }
    .on { border-color: #005499; background: #cce4f7; }
    .act { grid-column: 1 / -1; display: flex; justify-content: flex-end; gap: 8px; padding-top: 6px; }
    .push { box-sizing: border-box; width: 73px; height: 23px; padding: 0; border: 1px solid #adadad; background: #e1e1e1; font: inherit; color: #000; }
    .main { border: 2px solid #0078d7; }
  `;
  private opt(name: string, on = false) {
    return html`<button class=${classMap({ opt: true, on })} aria-label=${name || "OFF"}>${name ? html`<ui-icon name=${name}></ui-icon>` : "OFF"}</button>`;
  }
  render() {
    return html`
      <header class="title"><span>Place/Align</span><button class="close" aria-label="Close"><svg width="10" height="10"><path d="M0 0l10 10M10 0L0 10" stroke="#fff" /></svg></button></header>
      <div class="body">
        <div class="preview">
          <svg width="170" height="166" aria-hidden="true">
            <path d="M19.500 19.500h51v31h-51z" fill="red" stroke="#000" />
            <circle cx="40" cy="60" r="19.500" fill="lime" stroke="#000" />
            <path d="M45.500 80.500l25 60h-51z" fill="#ff0" stroke="#000" />
          </svg>
        </div>
        <div class="side">${this.opt("align top")}${this.opt("align middle")}${this.opt("spread v")}${this.opt("align bottom")}${this.opt("", true)}</div>
        <div class="under">${this.opt("align left", true)}${this.opt("align center")}${this.opt("spread h")}${this.opt("align right")}${this.opt("")}</div>
        <div class="act"><button class="push main">OK</button><button class="push">Cancel</button></div>
      </div>
    `;
  }
}

@customElement("app-root")
class AppRoot extends LitElement {
  static styles = css`
    :host { display: block; }
    * { box-sizing: border-box; }
    button { margin: 0; padding: 0; border: 0; background: none; color: inherit; font: inherit; }
    .app { display: flex; flex-direction: column; height: 100vh; overflow: hidden; background: #f0f0f0; color: #000; font: 12px/16px Lato, "Segoe UI", sans-serif; }
    .titlebar { flex: none; display: flex; align-items: center; height: 23px; padding: 0 4px 0 2px; gap: 5px; background: #0078d7; color: #fff; }
    .titlebar .name { flex: 1; font-size: 12px; font-weight: normal; margin: 0; padding-top: 1px; }
    .winbtn { display: grid; place-items: center; width: 41px; height: 21px; }
    .winbtn svg { display: block; }
    .menubar { flex: none; display: flex; align-items: center; height: 25px; border-bottom: 1px solid #a0a0a0; border-right: 1px solid #a0a0a0; box-shadow: inset 0 1px #fff; }
    .grip { width: 2px; height: 18px; margin: 0 3px; border-left: 1px solid #fff; border-right: 1px solid #999; }
    .menu { padding: 2px 9px 0; }
    .bars { flex: none; display: flex; }
    .one { height: 27px; }
    .two { height: 26px; }
    .pick { position: relative; display: flex; }
    .pick select { appearance: none; width: 100%; margin: 0; padding: 0 4px; border: 1px solid #777; border-radius: 0; background: #fff; color: #000; font: 10px "DejaVu Sans Mono", monospace; }
    .pick svg { position: absolute; right: 4px; top: 50%; margin-top: -3px; pointer-events: none; }
    .zoom { width: 60px; height: 20px; }
    .page { width: 140px; height: 22px; }
    .page select { background: #e1e1e1; border-color: #adadad; padding-left: 31px; color: #000; }
    .id { width: 120px; height: 20px; }
    .id select { background: #ccc; border-color: #bfbfbf; color: #777; opacity: 1; }
    .spin0 { width: 56px; height: 19px; }
    .main { flex: 1; min-height: 0; display: flex; }
    .panel { flex: none; display: flex; flex-direction: column; width: 240px; margin-right: 5px; padding-top: 2px; }
    .head { display: flex; align-items: center; height: 19px; padding: 0 3px 0 4px; background: #bfcddb; }
    .head h2 { flex: 1; margin: 0; font: 500 12px Roboto, sans-serif; }
    .sq { display: grid; place-items: center; width: 15px; height: 15px; background: #f0f0f0; box-shadow: inset -1px -1px #777, inset 1px 1px #fff; }
    .tree { flex: 1; list-style: none; margin: 2px 0 0; padding: 1px; border: 1px solid #828790; background: #fff; font: 11px/16px "Liberation Sans", sans-serif; }
    .node { display: flex; align-items: center; height: 16px; padding-left: 7px; }
    .picked { background: #f0f0f0; }
    .plus { width: 9px; height: 9px; margin-right: 6px; }
    .plus svg { display: block; }
    .node .lab { margin-left: 5px; }
    .ptools { height: 24px; padding-left: 2px; }
    .tabs { display: flex; height: 23px; border-top: 1px solid #696969; padding-left: 4px; }
    .tab { display: flex; align-items: center; gap: 4px; height: 20px; padding: 0 3px; border-left: 1px solid #fff; border-bottom: 1px solid #696969; white-space: nowrap; }
    .active { height: 22px; margin-top: -1px; padding: 0 8px 0 3px; border-right: 2px solid #696969; border-bottom-width: 2px; background: #f0f0f0; }
    .frame { flex: 1; min-width: 0; display: flex; flex-direction: column; border-left: 1px solid #696969; border-top: 2px solid #808080; border-right: 1px solid #fff; border-bottom: 1px solid #fff; }
    .upper { flex: 1; min-height: 0; display: flex; }
    .view { flex: 1; min-width: 0; display: flex; flex-direction: column; position: relative; overflow: hidden; padding: 27px 0 0 67px; background: repeating-conic-gradient(#20356c 0 25%, #34476a 0 50%) 0 0 / 4px 4px; }
    .view art-board { flex: none; }
    .hatch { flex: 1; width: 1024px; background: repeating-linear-gradient(135deg, #aaaaae 0 3px, #9a9a9e 3px 6px); }
    .dialog { position: absolute; left: 488px; top: 57px; }
    .vbar { flex: none; display: flex; flex-direction: column; width: 18px; border-left: 1px solid #fff; }
    .hbar { flex: none; display: flex; height: 17px; border-top: 1px solid #fff; }
    .arrow { flex: none; display: grid; place-items: center; width: 16px; height: 16px; }
    .vthumb { flex: 331; background: #cdcdcd; margin-right: 2px; }
    .hthumb { flex: 1229; background: #a6a6a6; }
    .pre-v { flex: 243; }
    .post-v { flex: 236; }
    .pre-h { flex: 341; }
    .corner { flex: none; width: 18px; }
    .col { flex: none; width: 26px; display: flex; flex-direction: column; }
    .col tool-strip { align-self: stretch; }
    .lower { height: 27px; border-top: 1px solid #fff; }
    .coords { align-self: flex-start; display: flex; align-items: center; height: 30px; padding-right: 17px; border-right: 1px solid #a0a0a0; border-bottom: 1px solid #a0a0a0; flex: none; }
    .coords .sym { width: 17px; text-align: center; font: 11px "Liberation Mono", monospace; }
    .coords .first { width: 12px; text-align: left; }
    .coords .wide { width: 30px; }
    .w51 { width: 51px; }
    .w48 { width: 48px; }
    .status { flex: none; display: flex; align-items: flex-end; height: 20px; gap: 3px; padding-left: 3px; }
    .status .msg { flex: 1; line-height: 18px; }
    .cell { height: 18px; padding: 0 4px 0 3px; border-left: 1px solid #a0a0a0; border-top: 1px solid #a0a0a0; line-height: 17px; }
  `;

  private chevron = (c: string) => html`<svg width="10" height="6" aria-hidden="true"><path d="M1 .5l4 4 4-4" fill="none" stroke=${c} stroke-width="1.500" /></svg>`;

  private scrollArrow(d: string, label: string) {
    return html`<button class="arrow" aria-label=${label}><svg width="8" height="8"><path d=${d} fill="none" stroke="#505050" stroke-width="2" /></svg></button>`;
  }

  private node(icon: string, label: string, picked = false) {
    return html`<li class=${classMap({ node: true, picked })}>
      <button class="plus" aria-label="Expand ${label}"><svg width="9" height="9"><path d="M.5.500h8v8h-8z" fill="#fff" stroke="#919191" /><path d="M2 4.500h5M4.500 2v5" stroke="#2a4a9a" /></svg></button>
      <ui-icon name=${icon}></ui-icon><span class="lab">${label}</span>
    </li>`;
  }

  render() {
    return html`
      <div class="app">
        <header class="titlebar">
          <ui-icon name="app"></ui-icon>
          <h1 class="name">VT STUDIO - Untitled.vfx * - Page No.0 Base</h1>
          <button class="winbtn" aria-label="Minimize"><svg width="10" height="10"><path d="M0 5.500h10" stroke="#fff" /></svg></button>
          <button class="winbtn" aria-label="Restore"><svg width="10" height="10"><path d="M.5 2.500h7v7h-7zM2.500 2V.5h7v7H8" fill="none" stroke="#fff" /></svg></button>
          <button class="winbtn" aria-label="Close"><svg width="10" height="10"><path d="M0 0l10 10M10 0L0 10" stroke="#fff" /></svg></button>
        </header>
        <nav class="menubar">
          <span class="grip"></span>
          ${["File", "Edit", "View", "Parts", "Resources", "Communications", "Soft-VT", "Tool", "Help"].map((m) => html`<button class="menu">${m}</button>`)}
        </nav>
        <div class="bars one">
          <tool-strip .items=${["new", "open", "save", "|", "export", "|", "cut", "copy", "paste", "|", "undo", "redo", "|", "print", "v"]}></tool-strip>
          <tool-strip .items=${["edit", "schedule", "|", "@page", "down", "up", "|", "!pick", "left", "|", "!base", "win 1", "win 2", "win 3", "|", "layers", "v"]}>
            <label slot="page" class="pick page"><select aria-label="Page"><option>0 :</option></select>${this.chevron("#505050")}</label>
          </tool-strip>
        </div>
        <div class="bars two">
          <tool-strip .items=${["zoom in", "zoom out", "@zoom", "grid", "|", "rows", "!all on", "all off", "|", "@state", "@id", "frames", "find", "|", "!screen edit", "!settings", "preview", "abc", "cnt", "touch", "book", "catalog", "v"]}>
            <label slot="zoom" class="pick zoom"><select aria-label="Zoom"><option>100%</option></select>${this.chevron("#505050")}</label>
            <spin-box slot="state" class="spin0" value="0" label="State"></spin-box>
            <label slot="id" class="pick id"><select aria-label="ID" disabled><option>ID0 :</option></select>${this.chevron("#a0a0a0")}</label>
          </tool-strip>
          <tool-strip .items=${["send", "send part", "receive", "sync", "|", "verify", "|", "comm setup", "!usb", "network", "v"]}></tool-strip>
        </div>
        <main class="main">
          <aside class="panel">
            <div class="head">
              <h2>Screen</h2>
              <button class="sq" aria-label="Pin"><svg width="9" height="11"><path d="M2 .5h5M2.500 0v6M6 0v6M0 6.500h9M4.500 6v5" fill="none" stroke="#222" /></svg></button>
              <button class="sq" aria-label="Close panel"><svg width="8" height="8"><path d="M0 0l8 8M8 0L0 8" stroke="#222" stroke-width="1.500" /></svg></button>
            </div>
            <ul class="tree">
              ${this.node("tree screen", "Screen", true)}
              ${this.node("tree window", "Global window")}
              ${this.node("tree printer", "Printer form")}
              ${this.node("tree trash", "Trash")}
            </ul>
            <tool-strip plain class="ptools" .items=${["edit", "+list", "copy off", "paste off", "rename off", "export", "convert", "layers"]}></tool-strip>
            <div class="tabs">
              <button class="tab"><ui-icon name="settings"></ui-icon>System setting</button>
              <button class="tab active"><ui-icon name="screen edit"></ui-icon>Screen</button>
            </div>
          </aside>
          <section class="frame">
            <div class="upper">
              <div class="view">
                <art-board></art-board>
                <div class="hatch"></div>
                <align-dialog class="dialog" role="dialog" aria-label="Place/Align"></align-dialog>
              </div>
              <div class="vbar">
                ${this.scrollArrow("M1 6l3-3 3 3", "Scroll up")}
                <span class="pre-v"></span><span class="vthumb"></span><span class="post-v"></span>
                ${this.scrollArrow("M1 2l3 3 3-3", "Scroll down")}
              </div>
            </div>
            <div class="hbar">
              ${this.scrollArrow("M6 1L3 4l3 3", "Scroll left")}
              <span class="pre-h"></span><span class="hthumb"></span>
              ${this.scrollArrow("M2 1l3 3-3 3", "Scroll right")}
              <span class="corner"></span>
            </div>
          </section>
          <div class="col">
            <tool-strip vertical .items=${["line", "polyline", "rect", "polygon", "ellipse", "arc", "sector", "|", "image", "frame", "|", "text", "note", "|", "dxf", "table", "sheet", "link", ">"]}></tool-strip>
          </div>
          <div class="col">
            <tool-strip vertical .items=${["numeric", "string", "message", "sound", "video", "film", "recipe", "file view", "remote", "camera", "|", "bar", "gauge", "tank", "level", "pie", "trend", "cloud", ">"]}></tool-strip>
            <tool-strip vertical .items=${["switch green", "switch red", "lamp", "lamps", "|", "objects", ">"]}></tool-strip>
          </div>
        </main>
        <div class="bars lower">
          <tool-strip .items=${["select shape", "!select", "|", "parts", "swap", "delete", "|", "rotate", "flip h", "flip v", "slant", "|", "front", "forward", "backward", "back", "group", "ungroup", "align", "^", "anchor", "v"]}></tool-strip>
          <tool-strip .items=${["snap", "|", "snap left", "snap right", "snap top", "snap bottom", "snap mid", "snap center", "v"]}></tool-strip>
        </div>
        <div class="coords">
          <span class="grip"></span>
          <span class="sym first">(</span><spin-box class="w51" label="Start X"></spin-box>
          <span class="sym">,</span><spin-box class="w51" label="Start Y"></spin-box>
          <span class="sym wide">)-(</span><spin-box class="w51" label="End X"></spin-box>
          <span class="sym">,</span><spin-box class="w51" label="End Y"></spin-box>
          <span class="sym">)</span><spin-box class="w48" value="197" label="Width"></spin-box>
          <span class="sym">x</span><spin-box class="w48" value="44" label="Height"></spin-box>
        </div>
        <footer class="status">
          <span class="msg">Align the selected object.</span>
          <span class="cell">VT5-WX15</span><span class="cell">KEYENCE KV-X500/X300 (Ethernet)</span><span class="cell">398, 50</span>
        </footer>
      </div>
    `;
  }
}
